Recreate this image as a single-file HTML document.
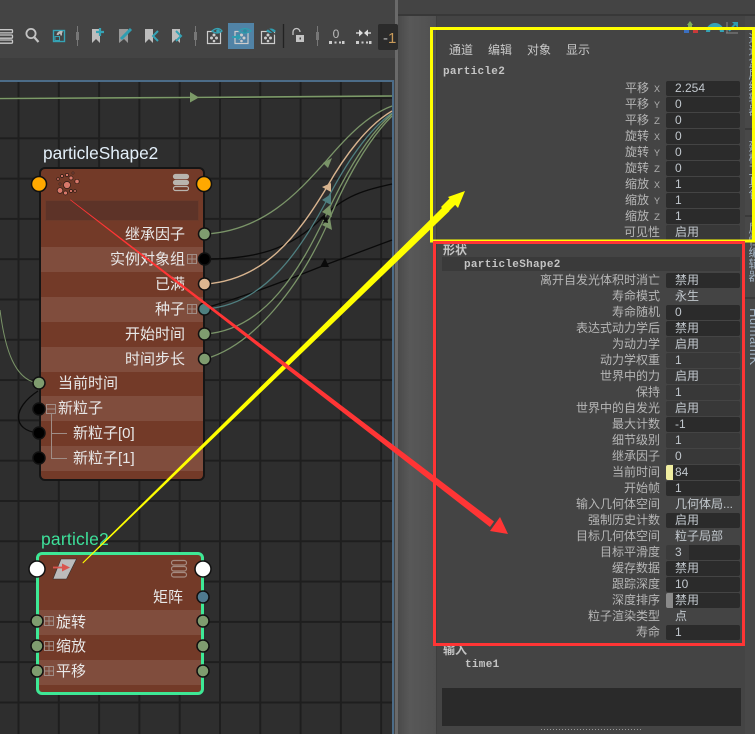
<!DOCTYPE html>
<html lang="zh"><head><meta charset="utf-8"><style>
html,body{margin:0;padding:0;width:755px;height:734px;overflow:hidden;background:#444}
body{position:relative;font-family:"Liberation Sans","Noto Sans CJK SC",sans-serif}
div,span,u{box-sizing:border-box}
.a{position:absolute}
.rows{position:absolute;left:437px;width:305px}
.r{height:16.03px;position:relative;font-size:12px;line-height:16px;color:#b6b6b6;white-space:nowrap}
.r b{font-weight:400;position:absolute;right:82px;top:0}
.r b i{font:400 10px "Liberation Mono",monospace;margin-left:5px;color:#aaa}
.r u{text-decoration:none;position:absolute;left:229px;top:.5px;width:74px;height:15px;background:#2b2b2b;border-radius:2px;color:#c2c8ce;padding-left:9px;font-size:12px;line-height:15px}
.r u.l{background:#383838}
.r u.n{background:none}
.nl{position:absolute;color:#e8e8e8;font-size:15px;line-height:20px;white-space:nowrap}
.m{position:absolute;font:700 11px "Liberation Mono",monospace;color:#c4c4c4;letter-spacing:.3px;white-space:nowrap}
.v{position:absolute;writing-mode:vertical-rl;font-size:12px;color:#9fb0c0;white-space:nowrap;line-height:12px}
</style></head><body>

<!-- panel backgrounds -->
<div class="a" style="left:0;top:58px;width:398px;height:22px;background:#3d3d3d"></div>
<div class="a" style="left:398px;top:0;width:39px;height:734px;background:linear-gradient(90deg,#4a4a4a,#585858 30%,#505050)"></div>
<div class="a" style="left:395px;top:0;width:3px;height:734px;background:#6a6a6a"></div>
<div class="a" style="left:398px;top:14px;width:357px;height:2px;background:#383838"></div>
<div class="a" style="left:398px;top:0;width:357px;height:14px;background:#444"></div>
<div class="a" style="left:436px;top:16px;width:309px;height:718px;background:#444;border-left:1px solid #3e3e3e"></div>
<div class="a" style="left:745px;top:16px;width:10px;height:718px;background:#484848"></div>

<!-- graph area -->
<div class="a" style="left:0;top:80px;width:394px;height:654px;background-color:#2e2e2e;background-image:linear-gradient(90deg,transparent 38.3px,#1e1e1e 38.3px,#1e1e1e 40.3px),linear-gradient(180deg,transparent 38.3px,#1e1e1e 38.3px,#1e1e1e 40.3px);background-size:40.3px 40.3px;background-position:-20.8px -23.3px;border-top:2px solid #4c6c88;border-right:2px solid #4c6c88"></div>

<!-- toolbar icons + connections -->
<svg class="a" style="left:0;top:0" width="400" height="734" viewBox="0 0 400 734" fill="none">
 <g stroke="#c8c8c8" stroke-width="1.3"><rect x="-3" y="29.7" width="15.5" height="3.2" rx="1"/><rect x="-3" y="35" width="15.5" height="3.2" rx="1"/><rect x="-3" y="40" width="15.5" height="3.2" rx="1"/></g>
 <circle cx="31" cy="33.5" r="4.6" stroke="#c4c4c4" stroke-width="1.8"/><path d="M34.5 37.5L38.5 42" stroke="#c4c4c4" stroke-width="2.2"/>
 <rect x="53.5" y="30.5" width="11" height="11" stroke="#35a3b5" stroke-width="1.4"/><rect x="55" y="36.5" width="4.5" height="4" stroke="#35a3b5"/><path d="M59 32h3v3.5h-1.5a2 2 0 0 0-2-2z" fill="#bbb"/><path d="M57.500 35a4 4 0 0 1 5-3" stroke="#bbb" stroke-width="2"/>
 <g stroke="#777"><path d="M77.500 26v20M195.500 26v20M317.500 26v20"/></g><g fill="#777"><rect x="76" y="32" width="3" height="8"/><rect x="194" y="32" width="3" height="8"/><rect x="316" y="32" width="3" height="8"/></g>
 <path d="M92 29h8v14l-4-4-4 4z" fill="#bdbdbd"/><path d="M96 32h8M100 28v8" stroke="#35a3b5" stroke-width="2.2"/>
 <path d="M119 29h9v14l-4-4-5 4z" fill="#9a9a9a"/><path d="M121 39L131 29" stroke="#2f9db0" stroke-width="3"/>
 <path d="M145 29h8v14l-4-4-4 4z" fill="#bdbdbd"/><path d="M158 31l-5 5 5 5" stroke="#35a3b5" stroke-width="2"/>
 <path d="M172 29h8v14l-4-4-4 4z" fill="#bdbdbd"/><path d="M176 31l5 5-5 5" stroke="#35a3b5" stroke-width="2"/>
 <rect x="228" y="23" width="26" height="26" fill="#5183a6"/>
 <g stroke="#ccc" stroke-width="1.2"><rect x="207.500" y="31.500" width="13" height="12"/><rect x="235" y="31.500" width="13" height="12"/><rect x="261.500" y="31.500" width="13" height="12"/></g>
 <g fill="#ccc"><circle cx="214" cy="35" r="1.500"/><circle cx="211.500" cy="38" r="1.500"/><circle cx="216.500" cy="38" r="1.500"/><circle cx="214" cy="41" r="1.300"/><circle cx="241.500" cy="35" r="1.500"/><circle cx="239" cy="38" r="1.500"/><circle cx="244" cy="38" r="1.500"/><circle cx="241.500" cy="41" r="1.300"/><circle cx="268" cy="35" r="1.500"/><circle cx="265.500" cy="38" r="1.500"/><circle cx="270.500" cy="38" r="1.500"/><circle cx="268" cy="41" r="1.300"/></g>
 <g><path d="M212 31q6-5 10 0q-5 4-10 0z" fill="#4a4a4a" stroke="#35a3b5" stroke-width="1.300"/><circle cx="218" cy="31" r="1.800" fill="#35a3b5"/>
 <path d="M239 31q6-5 12 0q-6 4-12 0z" fill="#5183a6" stroke="#2f9db0" stroke-width="1.300"/><circle cx="245" cy="31" r="1.800" fill="#2a8ea0"/><path d="M232 37h6" stroke="#2f9db0" stroke-width="2"/><circle cx="238" cy="37" r="2.500" fill="#2f9db0"/>
 <path d="M266 31q5-5 10 0q-5 4-10 0z" fill="#2f9db0"/><path d="M266 27l10 8" stroke="#444" stroke-width="1.200"/></g>
 <path d="M283.500 24v24" stroke="#222" stroke-width="1.300"/>
 <path d="M293 35v-3a3.500 3.500 0 0 1 7 0" stroke="#c4c4c4" stroke-width="1.300"/><rect x="296" y="35" width="8" height="7" fill="#c4c4c4"/><rect x="299.500" y="37.500" width="1.500" height="2" fill="#444"/>
 <text x="336" y="38" font-family="Liberation Sans" font-size="12" fill="#bbb" text-anchor="middle">0</text>
 <g fill="#ccc"><rect x="329" y="41" width="3" height="3"/><rect x="334.500" y="41.500" width="2" height="2"/><rect x="339" y="41.500" width="2" height="2"/><rect x="342" y="41" width="2.500" height="3"/><rect x="356" y="41" width="3" height="3"/><rect x="361.500" y="41.500" width="2" height="2"/><rect x="366" y="41.500" width="2" height="2"/><rect x="369" y="41" width="2.500" height="3"/></g>
 <path d="M356 33h5M366 33h5" stroke="#ccc" stroke-width="1.500"/><path d="M363 33l-4-3.500v7zM364 33l4-3.500v7z" fill="#ddd"/>
 <rect x="378" y="24" width="20" height="26" rx="2" fill="#2b2b2b"/>
 <text x="383" y="43" font-family="Liberation Sans" font-size="15" fill="#bbb">-<tspan fill="#c89a5a">1</tspan></text>

 <!-- connections -->
 <path d="M0 98.500L190 97.500L392 96" stroke="#7c9a68" stroke-width="1.600"/><path d="M190 92l9 5.500-9 5z" fill="#7c9a68"/>
 <path d="M205 234C265 231 300 190 327 160C350 133 370 114 392 106" stroke="#7a9468" stroke-width="1.300"/>
 <path d="M205 259C255 259 290 250 322 218C345 195 365 190 392 184" stroke="#0a0a0a" stroke-width="1.300"/>
 <path d="M205 284C265 280 298 235 327 187C345 155 368 125 392 111" stroke="#d8b48f" stroke-width="1.400"/>
 <path d="M205 308C240 298 280 283 325 265L392 240" stroke="#0a0a0a" stroke-width="1.300"/>
 <path d="M205 309C265 305 300 250 327 200C345 165 368 130 392 113" stroke="#4f7f80" stroke-width="1.300"/>
 <path d="M205 334C265 330 300 270 327 213C345 175 368 135 392 114" stroke="#7a9468" stroke-width="1.300"/>
 <path d="M205 359C255 345 300 285 327 225C345 180 368 140 392 116" stroke="#7a9468" stroke-width="1.300"/>
 <path d="M323 163l9-5-4 10z" fill="#7a9468"/><path d="M322 187l9-4 0 9z" fill="#d8b48f"/><path d="M322 200l9-6 0 11z" fill="#4f7f80"/><path d="M322 212l8-7 2 12z" fill="#7a9468"/><path d="M322 225l8-7 2 12z" fill="#7a9468"/>
 <path d="M320 218l5-4 1 7zM323 222l4-5 1 6z" fill="#0a0a0a"/><path d="M320 267l5-9 4 9z" fill="#0a0a0a"/>
 <path d="M0 310C5 350 15 380 38 383" stroke="#7a9468" stroke-width="1"/>
 <path d="M38 391C12 408 12 430 38 433" stroke="#0a0a0a" stroke-width="1.300"/>
</svg>

<!-- shape node -->
<div class="a" style="left:43px;top:142px;font-size:17.3px;line-height:22px;color:#e4f0fa">particleShape2</div>
<div class="a" style="left:39px;top:167px;width:166px;height:314px;background:#733a28;border:2px solid #151515;border-radius:6px;overflow:hidden">
 <div class="a" style="left:0;top:78px;width:162px;height:25px;background:#804d3d"></div>
 <div class="a" style="left:0;top:128px;width:162px;height:25px;background:#804d3d"></div>
 <div class="a" style="left:0;top:178px;width:162px;height:25px;background:#804d3d"></div>
 <div class="a" style="left:0;top:227px;width:162px;height:25px;background:#804d3d"></div>
 <div class="a" style="left:0;top:277px;width:162px;height:25px;background:#804d3d"></div>
 <div class="a" style="left:4px;top:31px;width:154px;height:21px;background:#5d3328;border:1px solid #6c3a2a"></div>
</div>
<div class="nl" style="right:570px;top:225px">继承因子</div>
<div class="nl" style="right:570px;top:250px">实例对象组</div>
<div class="nl" style="right:570px;top:275px">已满</div>
<div class="nl" style="right:570px;top:300px">种子</div>
<div class="nl" style="right:570px;top:325px">开始时间</div>
<div class="nl" style="right:570px;top:350px">时间步长</div>
<div class="nl" style="left:58px;top:374px">当前时间</div>
<div class="nl" style="left:58px;top:399px">新粒子</div>
<div class="nl" style="left:73px;top:424px">新粒子[0]</div>
<div class="nl" style="left:73px;top:449px">新粒子[1]</div>

<!-- particle node -->
<div class="a" style="left:41px;top:528px;font-size:17.5px;line-height:22px;letter-spacing:.2px;color:#3de09a">particle2</div>
<div class="a" style="left:36px;top:552px;width:168px;height:143px;background:#733a28;border:3px solid #3ee896;border-radius:6px;overflow:hidden">
 <div class="a" style="left:0;top:55px;width:162px;height:25px;background:#804d3d"></div>
 <div class="a" style="left:0;top:105px;width:162px;height:25px;background:#804d3d"></div>
</div>
<div class="nl" style="right:572px;top:588px">矩阵</div>
<div class="nl" style="left:56px;top:613px">旋转</div>
<div class="nl" style="left:56px;top:637px">缩放</div>
<div class="nl" style="left:56px;top:662px">平移</div>

<svg class="a" style="left:0;top:0" width="755" height="734" viewBox="0 0 755 734" fill="none">
 <!-- node icons -->
 <g fill="#d9786a" stroke="#2a1a14" stroke-width=".7"><circle cx="67" cy="185" r="3.500"/><circle cx="60" cy="190.500" r="2.800"/><circle cx="71" cy="178" r="2"/><circle cx="67" cy="175" r="1.600"/><circle cx="62" cy="176" r="1.500"/><circle cx="77" cy="181.500" r="2.200"/><circle cx="65.500" cy="193" r="2"/><circle cx="71" cy="191" r="1.500"/><circle cx="75" cy="191" r="1.300"/><circle cx="58" cy="179" r="1.300"/><circle cx="60" cy="184" r="1"/><circle cx="73" cy="173" r="1"/></g>
 <g stroke="#b9b4ae" stroke-width="1.200"><rect x="173.500" y="174.500" width="15" height="4" rx="2" fill="#b9b4ae"/><rect x="173.500" y="180.500" width="15" height="4" rx="2" fill="#b9b4ae"/><rect x="173.500" y="186.500" width="15" height="4" rx="2"/></g>
 <g stroke="#a58a80" stroke-width="1.200"><rect x="171.500" y="560.500" width="15" height="4.500" rx="2.200"/><rect x="171.500" y="566.500" width="15" height="4.500" rx="2.200"/><rect x="171.500" y="572.500" width="15" height="4.500" rx="2.200"/></g>
 <path d="M61 559h15.500l-10 20H53z" fill="#bcbcbc" stroke="#333" stroke-width=".6"/><path d="M53 567.500h10" stroke="#d9564f" stroke-width="1.800"/><path d="M62 563.500l8 4-8 4z" fill="#d9564f"/>

 <!-- expand boxes -->
 <g stroke="#a08d86" stroke-width="1">
  <rect x="187.500" y="254.500" width="9" height="9"/><path d="M188 259h8M192 255v8"/>
  <rect x="187.500" y="304.500" width="9" height="9"/><path d="M188 309h8M192 305v8"/>
  <rect x="46.500" y="404.500" width="9" height="9"/><path d="M47 409h8"/>
  <path d="M51.500 414v44.500H67M51.500 433.500H67"/>
  <rect x="44.500" y="616.500" width="9" height="9"/><path d="M45 621h8M49 617v8"/>
  <rect x="44.500" y="641.500" width="9" height="9"/><path d="M45 646h8M49 642v8"/>
  <rect x="44.500" y="666.500" width="9" height="9"/><path d="M45 671h8M49 667v8"/>
 </g>

 <!-- ports -->
 <g stroke="#111" stroke-width="1.500">
  <circle cx="39" cy="184" r="7.500" fill="#ffa800"/><circle cx="204" cy="184" r="7.500" fill="#ffa800"/>
  <circle cx="204.500" cy="234" r="6" fill="#7f9c6f"/><circle cx="204.500" cy="259" r="6" fill="#000"/><circle cx="204.500" cy="284" r="6" fill="#dcb690"/><circle cx="204.500" cy="309" r="6" fill="#4f8080"/><circle cx="204.500" cy="334" r="6" fill="#7f9c6f"/><circle cx="204.500" cy="359" r="6" fill="#7f9c6f"/>
  <circle cx="39" cy="383" r="6" fill="#7f9c6f"/><circle cx="39" cy="409" r="6" fill="#000"/><circle cx="39" cy="433" r="6" fill="#000"/><circle cx="39" cy="458" r="6" fill="#000"/>
  <circle cx="37" cy="569" r="8" fill="#fff"/><circle cx="203" cy="569" r="8" fill="#fff"/>
  <circle cx="203" cy="597" r="6" fill="#4f7a8f"/>
  <circle cx="37" cy="621" r="6" fill="#7f9c6f"/><circle cx="37" cy="646" r="6" fill="#7f9c6f"/><circle cx="37" cy="671" r="6" fill="#7f9c6f"/>
  <circle cx="203" cy="621" r="6" fill="#7f9c6f"/><circle cx="203" cy="646" r="6" fill="#7f9c6f"/><circle cx="203" cy="671" r="6" fill="#7f9c6f"/>
 </g>
 <!-- top-right icons -->
 <path d="M690 21l3 4h-6z" fill="#7fae5a"/><rect x="688" y="24" width="4" height="4" fill="#7fae5a"/><rect x="684" y="29" width="5" height="4" fill="#3b6fc0"/><rect x="693" y="29" width="5" height="4" fill="#c83a3a"/>
 <path d="M708 32a7 7 0 0 1 14 0" stroke="#35a3b5" stroke-width="4"/>
 <path d="M726 33h12M727 22v11" stroke="#888"/><path d="M729 31l7-8" stroke="#2f9db0" stroke-width="2"/><path d="M732 22h6v6z" fill="#2f9db0"/>
</svg>

<!-- attribute editor text -->
<div class="a" style="left:449px;top:42px;font-size:12px;line-height:16px;color:#c8c8c8;white-space:nowrap">通道<span style="margin-left:15px">编辑</span><span style="margin-left:15px">对象</span><span style="margin-left:15px">显示</span></div>
<div class="m" style="left:443px;top:66px">particle2</div>
<div class="rows" style="top:80px">
 <div class="r"><b>平移<i>X</i></b><u>2.254</u></div>
 <div class="r"><b>平移<i>Y</i></b><u>0</u></div>
 <div class="r"><b>平移<i>Z</i></b><u>0</u></div>
 <div class="r"><b>旋转<i>X</i></b><u>0</u></div>
 <div class="r"><b>旋转<i>Y</i></b><u>0</u></div>
 <div class="r"><b>旋转<i>Z</i></b><u>0</u></div>
 <div class="r"><b>缩放<i>X</i></b><u>1</u></div>
 <div class="r"><b>缩放<i>Y</i></b><u>1</u></div>
 <div class="r"><b>缩放<i>Z</i></b><u>1</u></div>
 <div class="r"><b>可见性</b><u class="l">启用</u></div>
</div>
<div class="a" style="left:442px;top:257px;width:298px;height:14px;background:#3a3a3a"></div>
<div class="a" style="left:443px;top:243px;font-size:12px;line-height:14px;font-weight:700;color:#c4c4c4">形状</div>
<div class="m" style="left:464px;top:259px">particleShape2</div>
<div class="rows" style="top:272px">
 <div class="r"><b>离开自发光体积时消亡</b><u>禁用</u></div>
 <div class="r"><b>寿命模式</b><u class="n">永生</u></div>
 <div class="r"><b>寿命随机</b><u>0</u></div>
 <div class="r"><b>表达式动力学后</b><u>禁用</u></div>
 <div class="r"><b>为动力学</b><u class="l">启用</u></div>
 <div class="r"><b>动力学权重</b><u class="l">1</u></div>
 <div class="r"><b>世界中的力</b><u class="l">启用</u></div>
 <div class="r"><b>保持</b><u class="l">1</u></div>
 <div class="r"><b>世界中的自发光</b><u class="l">启用</u></div>
 <div class="r"><b>最大计数</b><u>-1</u></div>
 <div class="r"><b>细节级别</b><u class="l">1</u></div>
 <div class="r"><b>继承因子</b><u class="l">0</u></div>
 <div class="r"><b>当前时间</b><u style="background:linear-gradient(90deg,#f0eea0 7px,#2b2b2b 7px)">84</u></div>
 <div class="r"><b>开始帧</b><u>1</u></div>
 <div class="r"><b>输入几何体空间</b><u class="n">几何体局...</u></div>
 <div class="r"><b>强制历史计数</b><u>启用</u></div>
 <div class="r"><b>目标几何体空间</b><u class="n">粒子局部</u></div>
 <div class="r"><b>目标平滑度</b><u style="background:linear-gradient(90deg,#3a3a3a 23px,#2b2b2b 23px)">3</u></div>
 <div class="r"><b>缓存数据</b><u>禁用</u></div>
 <div class="r"><b>跟踪深度</b><u>10</u></div>
 <div class="r"><b>深度排序</b><u style="background:linear-gradient(90deg,#8a8a8a 7px,#2b2b2b 7px)">禁用</u></div>
 <div class="r"><b>粒子渲染类型</b><u class="n">点</u></div>
 <div class="r"><b>寿命</b><u>1</u></div>
</div>
<div class="a" style="left:443px;top:643px;font-size:12px;line-height:14px;font-weight:700;color:#c4c4c4">输入</div>
<div class="m" style="left:465px;top:659px">time1</div>
<div class="a" style="left:442px;top:688px;width:299px;height:38px;background:#2a2a2a"></div>
<div class="a" style="left:541px;top:729px;width:101px;height:1px;background-image:linear-gradient(90deg,#999 1px,transparent 1px);background-size:3px 1px"></div>

<!-- right tabs -->
<div class="a" style="left:745px;top:128px;width:10px;height:2px;background:#3a3a3a"></div>
<div class="a" style="left:745px;top:215px;width:10px;height:2px;background:#3a3a3a"></div>
<div class="a" style="left:745px;top:297px;width:10px;height:2px;background:#3a3a3a"></div>
<div class="v" style="left:748px;top:32px">通道盒层编辑器</div>
<div class="v" style="left:748px;top:140px">建模工具包</div>
<div class="v" style="left:748px;top:222px">属性编辑器</div>
<div class="v" style="left:748px;top:308px;font-size:13px;letter-spacing:.5px">HumanIK</div>

<!-- annotations -->
<svg class="a" style="left:0;top:0" width="755" height="734" viewBox="0 0 755 734" fill="none">
 <path d="M83 563.500L449.500 211L444.500 205.500L82.500 562.500z" fill="#ffff00"/>
 <path d="M465 191L448 197L458 208z" fill="#ffff00"/><path d="M452 196L458 202L447 213L441 207z" fill="#ffff00"/>
 <path d="M70 200L490 527L494 521.500L70.500 199.500z" fill="#ff3535"/>
 <path d="M508 534L490 531L500 517z" fill="#ff3535"/>
 <rect x="431.500" y="28.500" width="322" height="212.500" stroke="#ffff00" stroke-width="3"/>
 <rect x="434.500" y="242.500" width="309" height="402" stroke="#ff3535" stroke-width="3"/>
</svg>
</body></html>
